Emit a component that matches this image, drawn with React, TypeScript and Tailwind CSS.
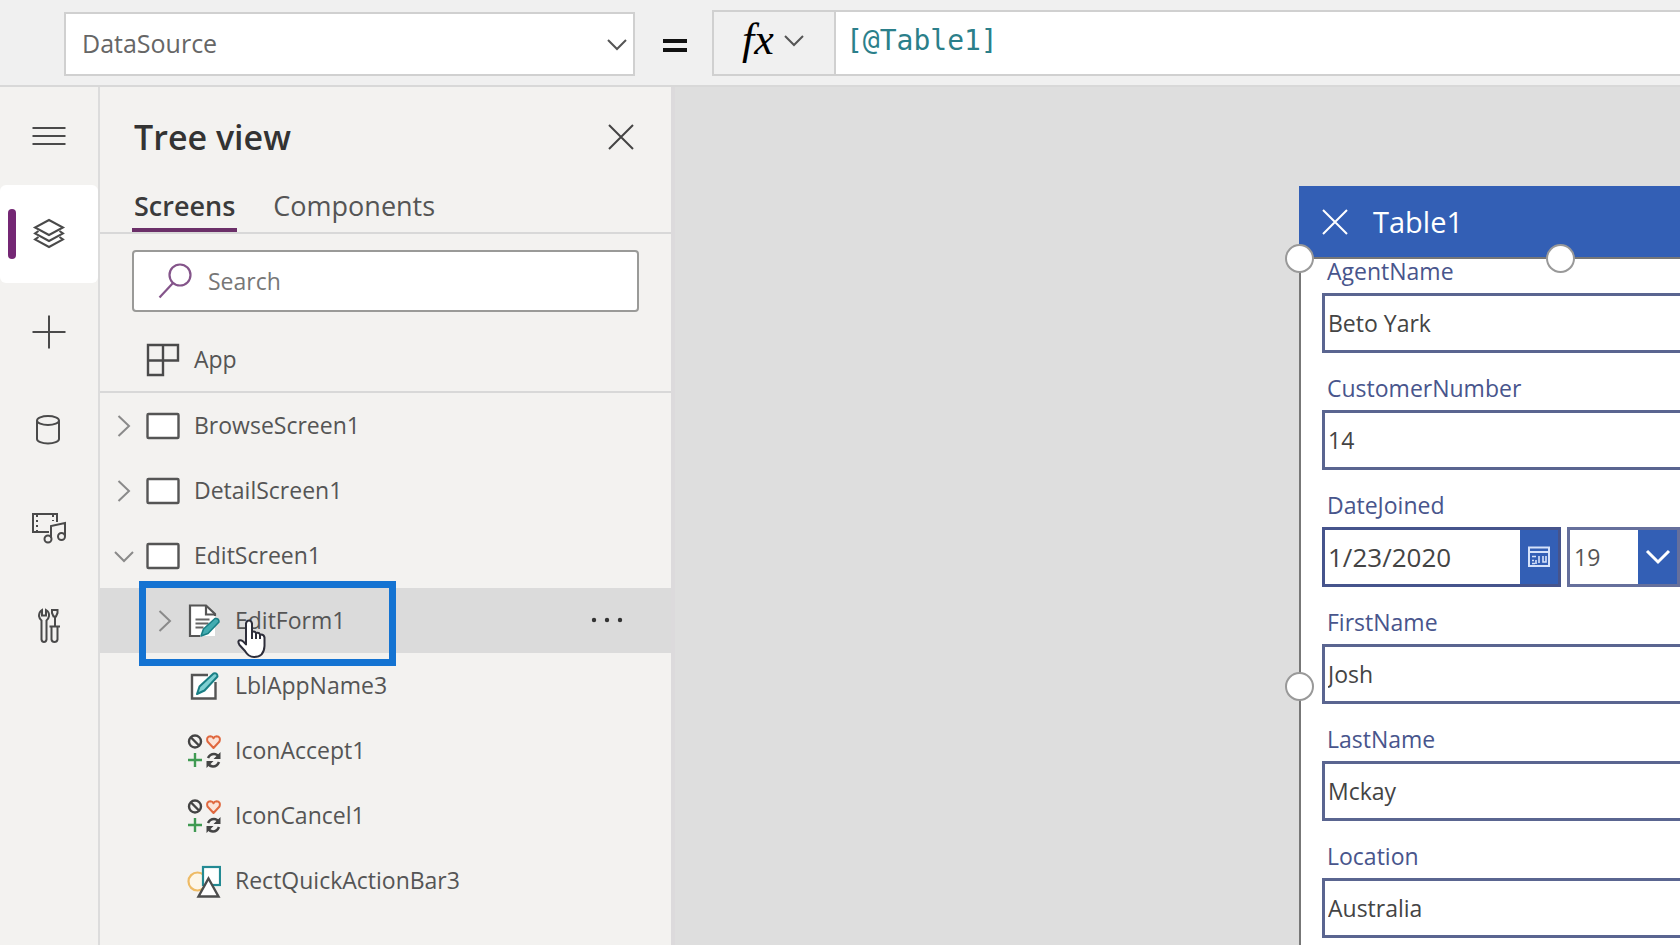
import type { ReactNode } from "react";

interface TreeItem {
  name: string;
  kind: "screen" | "form" | "label" | "icon" | "shape";
  expanded?: boolean;
  selected?: boolean;
}

interface Field {
  id: string;
  label: string;
  value: string;
}

const TREE_ITEMS: TreeItem[] = [
  { name: "BrowseScreen1", kind: "screen" },
  { name: "DetailScreen1", kind: "screen" },
  { name: "EditScreen1", kind: "screen", expanded: true },
  { name: "EditForm1", kind: "form", selected: true },
  { name: "LblAppName3", kind: "label" },
  { name: "IconAccept1", kind: "icon" },
  { name: "IconCancel1", kind: "icon" },
  { name: "RectQuickActionBar3", kind: "shape" },
];

const FIELDS_BEFORE_DATE: Field[] = [
  { id: "agent", label: "AgentName", value: "Beto Yark" },
  { id: "customer", label: "CustomerNumber", value: "14" },
];

const FIELDS_AFTER_DATE: Field[] = [
  { id: "first", label: "FirstName", value: "Josh" },
  { id: "last", label: "LastName", value: "Mckay" },
  { id: "location", label: "Location", value: "Australia" },
];

function Chevron({ open = false, className = "" }: { open?: boolean; className?: string }) {
  return (
    <svg className={className} width="24" height="24" viewBox="0 0 24 24" fill="none" stroke="currentColor" strokeWidth="2">
      <path d={open ? "M3 8 12 17 21 8" : "M6.5 2 17 12 6.5 22"} />
    </svg>
  );
}

function ItemIcon({ kind }: { kind: TreeItem["kind"] }) {
  if (kind === "screen") {
    return (
      <svg width="34" height="34" viewBox="0 0 34 34">
        <rect x="1.5" y="5" width="31" height="24" rx="1" fill="#fff" stroke="#555" strokeWidth="2.4" />
      </svg>
    );
  }
  if (kind === "form") {
    return (
      <svg width="34" height="34" viewBox="0 0 34 34">
        <path d="M3 1.5h16l9 9V32H3z" fill="#fff" />
        <path d="M28 12v-2L19 1.5H3V32h10" fill="none" stroke="#555" strokeWidth="2.2" />
        <path d="M19 2v8.5h8" fill="none" stroke="#555" strokeWidth="2.2" />
        <path d="M8.5 15.5h14M8.5 19.5h13M8.5 23.5h8" stroke="#666" strokeWidth="1.8" />
        <path d="m14 32 2.500-7L28 14.500q4-.5 4 3.500L21 29.500z" fill="#42acb1" stroke="#197f85" strokeWidth="1.6" strokeLinejoin="round" />
      </svg>
    );
  }
  if (kind === "label") {
    return (
      <svg width="34" height="34" viewBox="0 0 34 34">
        <path d="M5 6h23v23H5z" fill="#fff" />
        <path d="M21 6H5v23.500h23.500V13" fill="none" stroke="#555" strokeWidth="2.4" />
        <path d="m10 25 2.500-7.500L26.500 4.500q4-1 4 3L17.500 21.500z" fill="#7fd0d3" stroke="#197f85" strokeWidth="2" strokeLinejoin="round" />
      </svg>
    );
  }
  if (kind === "icon") {
    return (
      <svg width="34" height="34" viewBox="0 0 34 34" fill="none">
        <circle cx="8" cy="7.5" r="6" stroke="#444" strokeWidth="2.4" />
        <path d="m4 3.500 8 8" stroke="#444" strokeWidth="2.4" />
        <path d="M26.500 14 20.500 7.500q-1.500-5 3-5.200 2 0 3 2 1-2 3-2 4.500.2 3 5.200z" fill="#fbe3d8" stroke="#e0683f" strokeWidth="2" strokeLinejoin="round" />
        <path d="M8 19v14M1 26h14" stroke="#3f9a52" strokeWidth="2.4" />
        <path d="M21 24q2-4 6-4 3 0 5 3M32 28q-2 4.500-6 4.500-3 0-5-3" stroke="#444" strokeWidth="2.6" />
        <path d="M33.500 18v7h-7zM19.500 34v-7h7z" fill="#444" />
      </svg>
    );
  }
  return (
    <svg width="34" height="34" viewBox="0 0 34 34">
      <circle cx="10.5" cy="17.5" r="9" fill="#fdf6e8" stroke="#eebb65" strokeWidth="2.2" />
      <rect x="16" y="3" width="17" height="18" fill="#fff" stroke="#238a93" strokeWidth="2.2" />
      <path d="M21.500 14.500 31.500 32.500h-20z" fill="#fff" stroke="#4d4d4d" strokeWidth="2.4" />
    </svg>
  );
}

function HandPointer() {
  return (
    <svg className="pointer-events-none absolute left-[91px] top-[31px]" width="30" height="40" viewBox="0 0 30 40">
      <path
        d="M9 22V4.500Q9.500 1.500 12 1.500T15 4.500V13q2.500-1.500 4 1 3-1 4 1.500 4-.5 4.500 3V27q-.5 11-10.500 11-5.500 0-9-6L2.500 26Q.5 22.500 2 21.500q3-1.500 7 4z"
        fill="#fff"
        stroke="#2d2d3a"
        strokeWidth="2"
        strokeLinejoin="round"
      />
      <path d="M15 12v8M19 14v6M23 15.500V20" stroke="#2d2d3a" strokeWidth="2" />
    </svg>
  );
}

function TreeRow({ item }: { item: TreeItem }) {
  const isScreen = item.kind === "screen";
  const hasChevron = isScreen || item.kind === "form";

  return (
    <li className={item.selected ? "relative flex h-[65px] items-center bg-[#dbdbdb]" : "flex h-[65px] items-center"}>
      <button
        type="button"
        className={
          isScreen
            ? "flex h-full flex-1 items-center gap-[10px] pl-3 text-left"
            : "flex h-full flex-1 items-center gap-[10px] pl-[53px] text-left"
        }
      >
        {hasChevron ? <Chevron open={item.expanded} className="text-[#8a8a8a]" /> : <span className="w-6" />}
        <span className="flex items-center gap-[14px]">
          <ItemIcon kind={item.kind} />
          <span>{item.name}</span>
        </span>
      </button>

      {item.selected && (
        <>
          <button type="button" aria-label="More" className="px-12 py-4">
            <svg width="32" height="8" viewBox="0 0 32 8" fill="#333">
              <circle cx="3" cy="3" r="2.2" />
              <circle cx="16" cy="3" r="2.2" />
              <circle cx="29" cy="3" r="2.2" />
            </svg>
          </button>
          {/* callout frame around the selected form */}
          <div className="pointer-events-none absolute -top-[7px] left-[39px] h-[85px] w-[257px] border-7 border-[#1473d2]">
            <HandPointer />
          </div>
        </>
      )}
    </li>
  );
}

function RailButton({ label, active = false, children }: { label: string; active?: boolean; children: ReactNode }) {
  return (
    <button
      type="button"
      aria-label={label}
      className={
        active
          ? "relative flex h-[98px] items-center justify-center rounded-md bg-white"
          : "flex h-[98px] items-center justify-center"
      }
    >
      {active && <span className="absolute left-2 top-6 h-[50px] w-2 rounded-full bg-[#742774]" />}
      <svg width="36" height="36" viewBox="0 0 36 36" fill="none" stroke="#4a4a4a" strokeWidth="2">
        {children}
      </svg>
    </button>
  );
}

function SideRail() {
  return (
    <nav className="flex w-[100px] shrink-0 flex-col border-r-2 border-[#dcdcdc]">
      <RailButton label="Menu">
        <path d="M1.500 10h33M1.500 18h33M1.500 26h33" />
      </RailButton>
      <RailButton label="Tree view" active>
        <path d="M18 4 32 11.500 18 19 4 11.500z" />
        <path d="M7.500 15 4 17.500 18 25l14-7.500-3.500-2.500" />
        <path d="M7.500 21 4 23.500 18 31l14-7.500-3.500-2.500" />
      </RailButton>
      <RailButton label="Insert">
        <path d="M18 1.500v33M1.500 18h33" />
      </RailButton>
      <RailButton label="Data">
        <ellipse cx="17" cy="8.5" rx="11" ry="4.5" />
        <path d="M6 8.500V27c0 2.500 5 4.500 11 4.500S28 29.500 28 27V8.500" />
      </RailButton>
      <RailButton label="Media">
        <path d="M18 22H2V4h24v8" />
        <path d="M6 5v16M22 5v6" strokeDasharray="2 3" />
        <path d="M20 28V16l14-3v13" />
        <circle cx="17" cy="29" r="3.5" />
        <circle cx="30.5" cy="26.5" r="3.5" />
      </RailButton>
      <RailButton label="Advanced tools">
        <path d="M11 2v5.500h4V2q3.500 2 3 6-.5 3-2.500 4.500v19q-.5 2.500-2.500 2.500t-2.500-2.500v-19Q8.500 11 8 8q0-4 3-6z" />
        <path d="M21 2h5.500v3l-1.500 3.500h-2.500L21 5zM24 9v9M18.500 18.500h10.500M20.500 19v12.500q.5 2.500 3 2.500t3-2.500V19" />
      </RailButton>
    </nav>
  );
}

function FormulaBar() {
  return (
    <header className="flex h-[87px] shrink-0 border-b-2 border-[#d8d8d8] bg-[#f0f0f0] pl-16 pt-[10px]">
      <div className="mt-[2px] flex h-16 w-[571px] items-center border-2 border-[#d0d0d0] bg-white pr-1">
        <select aria-label="Property" className="h-full flex-1 appearance-none bg-transparent pl-4 text-[25px] text-[#666] outline-none">
          <option>DataSource</option>
        </select>
        <Chevron open className="pointer-events-none text-[#555]" />
      </div>
      <div className="flex h-[66px] w-[77px] items-center justify-center pl-[2px] pt-1">
        <svg width="24" height="16" viewBox="0 0 24 16" stroke="#111" strokeWidth="4">
          <path d="M0 4h24M0 13h24" />
        </svg>
      </div>
      <div className="flex h-[66px] flex-1 border-2 border-r-0 border-[#d0d0d0]">
        <button
          type="button"
          aria-label="Functions"
          className="flex w-[122px] items-center justify-center gap-2 border-r-2 border-[#d0d0d0] pb-[6px] font-['Liberation_Serif',serif] text-[44px] leading-none text-black italic"
        >
          <span>fx</span>
          <Chevron open className="text-[#555]" />
        </button>
        <input
          aria-label="Formula"
          defaultValue="[@Table1]"
          className="min-w-0 flex-1 bg-white pb-1 pl-[10px] font-['DejaVu_Sans_Mono',monospace] text-[28px] text-[#2b7f8a] outline-none"
        />
      </div>
    </header>
  );
}

function TreePanel() {
  return (
    <aside className="flex w-[575px] shrink-0 flex-col border-r-4 border-[#dcdadc] text-[23px] text-[#555]">
      <div className="flex h-[100px] items-center justify-between pl-[34px] pr-9">
        <h1 className="text-[34px] font-semibold text-[#333]">Tree view</h1>
        <button type="button" aria-label="Close">
          <svg width="28" height="28" viewBox="0 0 28 28" stroke="#444" strokeWidth="2">
            <path d="m2 2 24 24M26 2 2 26" />
          </svg>
        </button>
      </div>

      <div className="flex h-[47px] gap-9 border-b-2 border-[#d8d8d8] pl-8 text-[27px]">
        <button type="button" className="border-b-4 border-[#6b2f68] px-[2px] pb-1 font-semibold leading-9 text-[#3b3b3b]">
          Screens
        </button>
        <button type="button" className="pb-2 leading-9">
          Components
        </button>
      </div>

      <div className="mx-8 mt-4 flex h-[62px] items-center gap-4 rounded-[4px] border-2 border-[#9a9a98] bg-white pl-6">
        <svg width="34" height="36" viewBox="0 0 34 36" fill="none" stroke="#84548a" strokeWidth="2.2">
          <circle cx="22" cy="12" r="10.5" />
          <path d="M15 20 1.500 34.500" />
        </svg>
        <input aria-label="Search" placeholder="Search" className="min-w-0 flex-1 outline-none placeholder:text-[#777]" />
      </div>

      <button type="button" className="mt-2 flex h-[73px] items-center gap-[14px] border-b-2 border-[#d8d8d8] pb-1 pl-[46px] pt-3 text-left">
        <svg width="34" height="34" viewBox="0 0 34 34" fill="none" stroke="#4a4a4a" strokeWidth="2.4">
          <path d="M2 2h30v15.500H2zM2 2v30h15V2M2 17.500h15" />
        </svg>
        <span>App</span>
      </button>

      <ul>
        {TREE_ITEMS.map((item) => (
          <TreeRow key={item.name} item={item} />
        ))}
      </ul>
    </aside>
  );
}

function TextField({ field }: { field: Field }) {
  return (
    <div className="flex flex-col gap-[10px]">
      <label htmlFor={field.id} className="pl-[5px] leading-6 text-[#48558c]">
        {field.label}
      </label>
      <input
        id={field.id}
        defaultValue={field.value}
        className="h-[60px] w-full border-3 border-r-0 border-[#5a6590] bg-white pl-[3px] text-[#444] outline-none"
      />
    </div>
  );
}

function DateField() {
  return (
    <div className="flex flex-col gap-[10px]">
      <label htmlFor="joined" className="pl-[5px] leading-6 text-[#48558c]">
        DateJoined
      </label>
      <div className="flex gap-[6px]">
        <div className="flex h-[60px] w-[239px] border-3 border-[#46548c] bg-white">
          <input id="joined" defaultValue="1/23/2020" className="min-w-0 flex-1 pl-[3px] text-[26px] text-[#444] outline-none" />
          <button type="button" aria-label="Pick a date" className="flex w-[38px] items-center justify-center bg-[#335fb5]">
            <svg width="22" height="22" viewBox="0 0 22 22" fill="none" stroke="#d5e2fa" strokeWidth="2">
              <path d="M1 1.500h20v18.500H1zM1 6h20" />
              <path d="M4 10.500h4M4 14.500h2M4 17.500h3M8 14v4M11 10v7M15 10v6h3v-6" strokeWidth="1.6" />
            </svg>
          </button>
        </div>
        <div className="flex h-[60px] flex-1 border-3 border-[#66709c] bg-white">
          <select aria-label="Hour" className="min-w-0 flex-1 appearance-none pl-1 text-[#555] outline-none">
            <option>19</option>
          </select>
          <span className="pointer-events-none flex w-[39px] items-center justify-center bg-[#335fb5]">
            <svg width="26" height="18" viewBox="0 0 26 18" fill="none" stroke="#fff" strokeWidth="3">
              <path d="m2 3 11 11L24 3" />
            </svg>
          </span>
        </div>
      </div>
    </div>
  );
}

function Handle({ className }: { className: string }) {
  return <span className={`absolute size-[29px] rounded-full border-2 border-[#999] bg-white ${className}`} />;
}

function AppPreview() {
  return (
    <section className="relative flex-1 font-['Open_Sans',sans-serif] text-[23px]">
      <div className="flex h-[71px] items-center gap-6 bg-[#335fb5] pl-[22px] text-white">
        <button type="button" aria-label="Cancel">
          <svg width="28" height="28" viewBox="0 0 28 28" stroke="currentColor" strokeWidth="2">
            <path d="m2 2 24 24M26 2 2 26" />
          </svg>
        </button>
        <h2 className="text-[29px] font-medium">Table1</h2>
      </div>
      <form className="flex flex-col gap-[23px] border-l-2 border-t-2 border-[#777] bg-white pb-2 pl-[21px]">
        {FIELDS_BEFORE_DATE.map((field) => (
          <TextField key={field.id} field={field} />
        ))}
        <DateField />
        {FIELDS_AFTER_DATE.map((field) => (
          <TextField key={field.id} field={field} />
        ))}
      </form>
      {/* selection handles of the form */}
      <Handle className="-left-[14px] top-[58px]" />
      <Handle className="left-[247px] top-[58px]" />
      <Handle className="-left-[14px] top-[486px]" />
    </section>
  );
}

export default function App() {
  return (
    <div className="flex h-screen flex-col overflow-hidden bg-[#f3f2f0] font-['Open_Sans',sans-serif]">
      <FormulaBar />
      <div className="flex min-h-0 flex-1">
        <SideRail />
        <TreePanel />
        <main className="flex min-w-0 flex-1 bg-[#dedede] pl-[624px] pt-[99px]">
          <AppPreview />
        </main>
      </div>
    </div>
  );
}
